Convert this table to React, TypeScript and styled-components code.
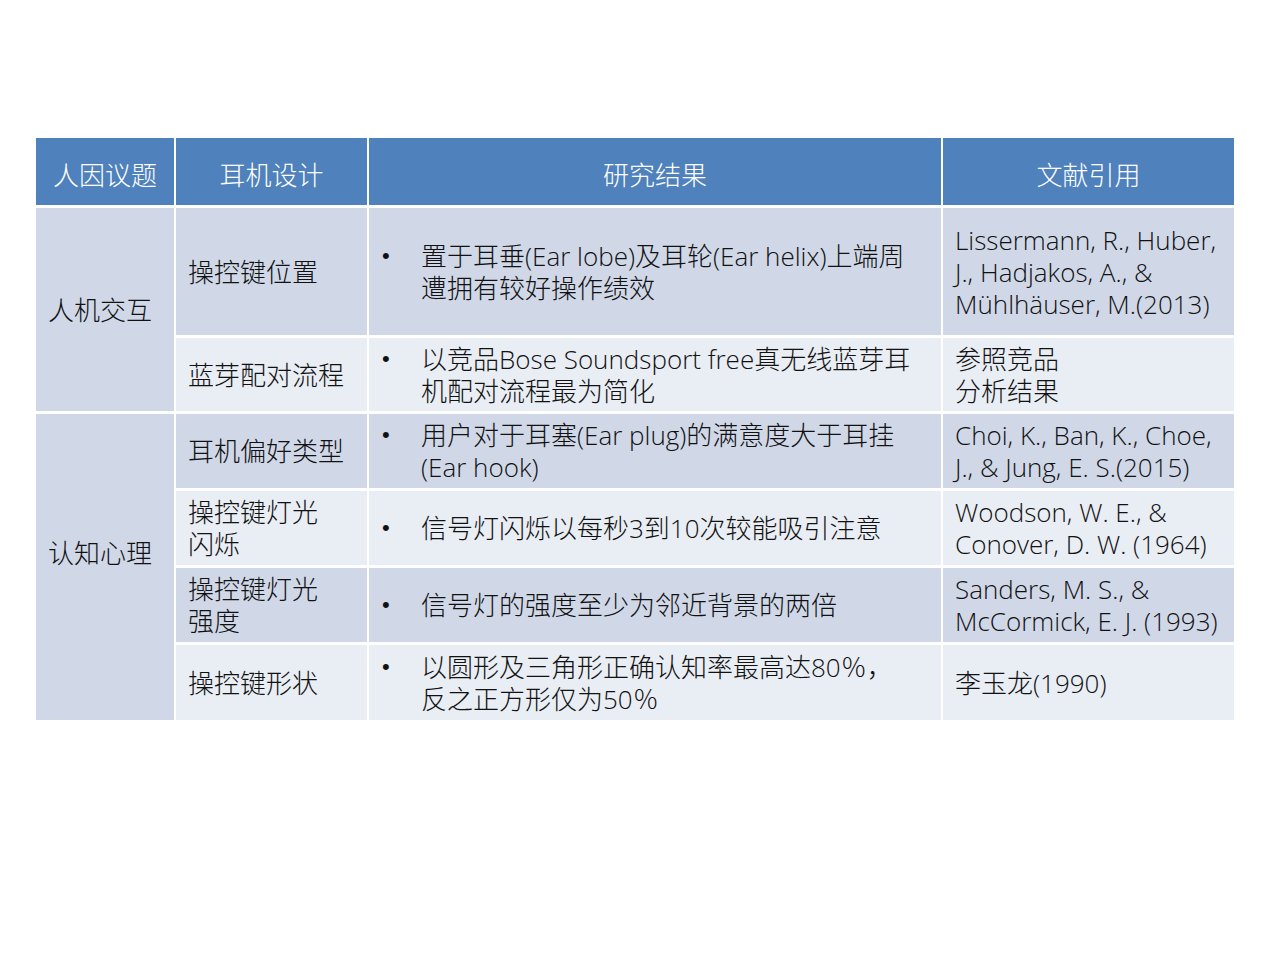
import React from 'react';
import styled, { createGlobalStyle } from 'styled-components';

const GlobalStyle = createGlobalStyle`
  html, body {
    margin: 0;
    padding: 0;
    background: #ffffff;
  }
  body {
    font-family: 'Open Sans', 'Noto Sans CJK SC', sans-serif;
  }
`;

const Page = styled.div`
  width: 1280px;
  height: 960px;
  padding: 138px 0 0 36px;
  box-sizing: border-box;
`;

const Table = styled.div`
  display: grid;
  grid-template-columns: 138px 191px 572px 291px;
  grid-template-rows: 67px 127px 73px 74px 74px 74px 75px;
  column-gap: 2px;
  row-gap: 3px;
  width: 1198px;
  background: #ffffff;
`;

interface CellProps {
  $tone: 'head' | 'dark' | 'light';
  $center?: boolean;
  $span?: number;
  $lift?: number;
}

const tones = {
  head: '#4f81bd',
  dark: '#d0d8e8',
  light: '#e9edf4',
};

const Cell = styled.div<CellProps>`
  display: flex;
  align-items: center;
  justify-content: ${({ $center }) => ($center ? 'center' : 'flex-start')};
  padding: ${({ $tone, $lift }) =>
    $tone === 'head' ? '6px 12px 0' : `0 12px ${($lift || 0) * 2}px`};
  background: ${({ $tone }) => tones[$tone]};
  color: ${({ $tone }) => ($tone === 'head' ? '#ffffff' : '#111111')};
  font-size: 26px;
  font-weight: 300;
  line-height: 32px;
  white-space: nowrap;
  grid-row: ${({ $span }) => ($span ? `span ${$span}` : 'auto')};
`;

const BulletLine = styled.div`
  display: flex;
  align-items: flex-start;
`;

const Dot = styled.span`
  width: 39px;
  flex: none;
  font-family: 'Liberation Sans', sans-serif;
  font-size: 22px;
  padding-left: 1px;
`;

type Row = {
  tone: 'dark' | 'light';
  design: React.ReactNode;
  result: React.ReactNode;
  cite: React.ReactNode;
};

const rows: Row[] = [
  {
    tone: 'dark',
    design: '操控键位置',
    result: (
      <>
        置于耳垂(Ear lobe)及耳轮(Ear helix)上端周
        <br />
        遭拥有较好操作绩效
      </>
    ),
    cite: (
      <>
        Lissermann, R., Huber,
        <br />
        J., Hadjakos, A., &amp;
        <br />
        Mühlhäuser, M.(2013)
      </>
    ),
  },
  {
    tone: 'light',
    design: '蓝芽配对流程',
    result: (
      <>
        以竞品Bose Soundsport free真无线蓝芽耳
        <br />
        机配对流程最为简化
      </>
    ),
    cite: (
      <>
        参照竞品
        <br />
        分析结果
      </>
    ),
  },
  {
    tone: 'dark',
    design: '耳机偏好类型',
    result: (
      <>
        用户对于耳塞(Ear plug)的满意度大于耳挂
        <br />
        (Ear hook)
      </>
    ),
    cite: (
      <>
        Choi, K., Ban, K., Choe,
        <br />
        J., &amp; Jung, E. S.(2015)
      </>
    ),
  },
  {
    tone: 'light',
    design: (
      <>
        操控键灯光
        <br />
        闪烁
      </>
    ),
    result: '信号灯闪烁以每秒3到10次较能吸引注意',
    cite: (
      <>
        Woodson, W. E., &amp;
        <br />
        Conover, D. W. (1964)
      </>
    ),
  },
  {
    tone: 'dark',
    design: (
      <>
        操控键灯光
        <br />
        强度
      </>
    ),
    result: '信号灯的强度至少为邻近背景的两倍',
    cite: (
      <>
        Sanders, M. S., &amp;
        <br />
        McCormick, E. J. (1993)
      </>
    ),
  },
  {
    tone: 'light',
    design: '操控键形状',
    result: (
      <>
        以圆形及三角形正确认知率最高达80％，
        <br />
        反之正方形仅为50％
      </>
    ),
    cite: '李玉龙(1990)',
  },
];

export default function App(): JSX.Element {
  return (
    <Page>
      <GlobalStyle />
      <Table>
        <Cell $tone="head" $center>
          人因议题
        </Cell>
        <Cell $tone="head" $center>
          耳机设计
        </Cell>
        <Cell $tone="head" $center>
          研究结果
        </Cell>
        <Cell $tone="head" $center>
          文献引用
        </Cell>

        {rows.map((row, index) => (
          <React.Fragment key={index}>
            {index === 0 && (
              <Cell $tone="dark" $span={2}>
                人机交互
              </Cell>
            )}
            {index === 2 && (
              <Cell $tone="dark" $span={4} $lift={14}>
                认知心理
              </Cell>
            )}
            <Cell $tone={row.tone}>
              <div>{row.design}</div>
            </Cell>
            <Cell $tone={row.tone}>
              <BulletLine>
                <Dot>•</Dot>
                <div>{row.result}</div>
              </BulletLine>
            </Cell>
            <Cell $tone={row.tone}>
              <div>{row.cite}</div>
            </Cell>
          </React.Fragment>
        ))}
      </Table>
    </Page>
  );
}
